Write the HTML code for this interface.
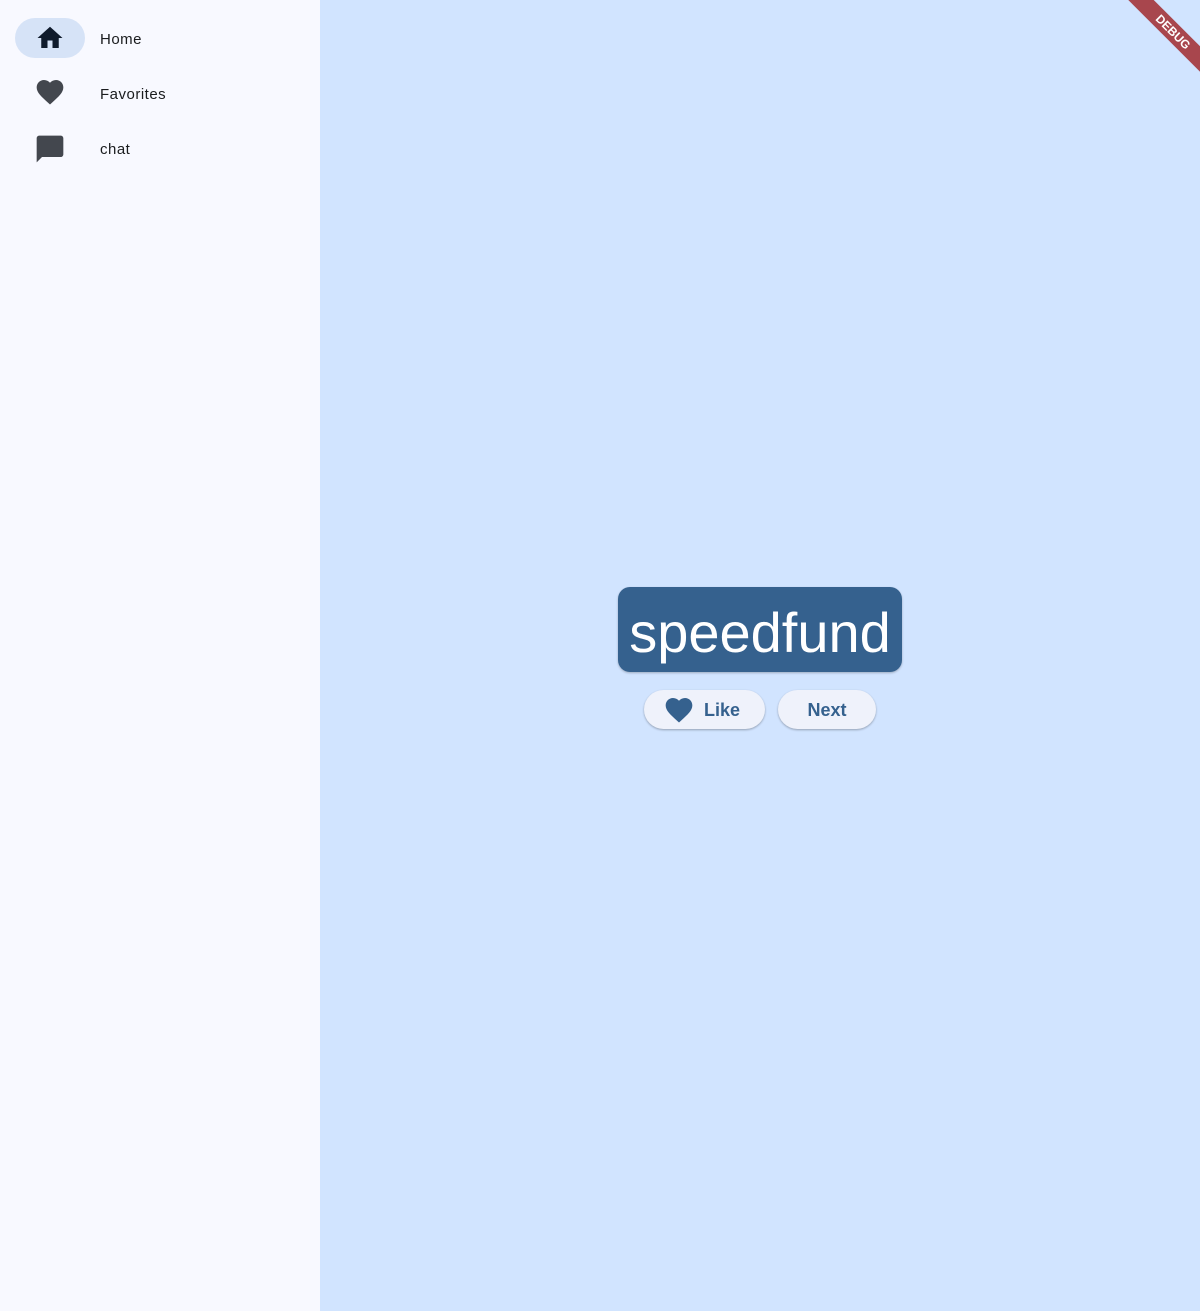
<!DOCTYPE html>
<html><head><style>
html,body{margin:0;padding:0;width:1200px;height:1311px;overflow:hidden;font-family:"Liberation Sans",sans-serif;}
.side{position:absolute;left:0;top:0;width:320px;height:1311px;background:#f8f9ff;}
.main{position:absolute;left:320px;top:0;width:880px;height:1311px;background:#d1e4ff;}
.item{position:absolute;left:0;width:320px;height:40px;}
.item .ic{position:absolute;left:15px;top:0;width:70px;height:40px;border-radius:20px;}
.item svg{position:absolute;}
.item span{position:absolute;left:100px;top:13px;font-size:15px;color:#1a1c1e;letter-spacing:0.5px;}
.card{position:absolute;left:618px;top:587px;width:284px;height:85px;background:#35618e;border-radius:12px;color:#fff;font-size:56px;text-align:center;line-height:92px;box-shadow:0 1px 2px rgba(0,0,0,.25);}
.btn{position:absolute;top:690px;height:39px;border-radius:20px;background:#eff2fb;box-shadow:0 1px 2px rgba(0,0,0,.3);color:#35618e;font-size:18px;font-weight:bold;line-height:41px;}
.banner{position:absolute;left:1113px;top:23px;width:120px;height:18px;background:#a8464d;transform:rotate(45deg);color:#fff;font-size:12px;font-weight:bold;text-align:center;line-height:18px;}
</style></head><body>
<div class="side">
 <div class="item" style="top:18px"><div class="ic" style="background:#d6e3f7"></div>
  <svg style="left:35px;top:5px" width="30" height="30" viewBox="0 0 24 24"><path d="M10 20v-6h4v6h5v-8h3L12 3 2 12h3v8z" fill="#0f1b2c"/></svg><span>Home</span></div>
 <div class="item" style="top:73px">
  <svg style="left:34px;top:3px" width="32" height="32" viewBox="0 0 24 24"><path d="M12 21.35l-1.45-1.32C5.4 15.36 2 12.28 2 8.5 2 5.42 4.42 3 7.5 3c1.74 0 3.41.81 4.5 2.09C13.09 3.81 14.76 3 16.5 3 19.58 3 22 5.42 22 8.5c0 3.78-3.4 6.86-8.55 11.54z" fill="#43474e"/></svg><span>Favorites</span></div>
 <div class="item" style="top:128px">
  <svg style="left:34px;top:5px" width="32" height="32" viewBox="0 0 24 24"><path d="M20 2H4c-1.1 0-2 .9-2 2v18l4-4h14c1.1 0 2-.9 2-2V4c0-1.1-.9-2-2-2z" fill="#43474e"/></svg><span>chat</span></div>
</div>
<div class="main"></div>
<div class="card">speedfund</div>
<div class="btn" style="left:644px;width:121px;">
 <svg style="position:absolute;left:19px;top:4px" width="32" height="32" viewBox="0 0 24 24"><path d="M12 21.35l-1.45-1.32C5.4 15.36 2 12.28 2 8.5 2 5.42 4.42 3 7.5 3c1.74 0 3.41.81 4.5 2.09C13.09 3.81 14.76 3 16.5 3 19.58 3 22 5.42 22 8.5c0 3.78-3.4 6.86-8.55 11.54z" fill="#35618e"/></svg>
 <span style="position:absolute;left:60px">Like</span></div>
<div class="btn" style="left:778px;width:98px;text-align:center">Next</div>
<div class="banner">DEBUG</div>
</body></html>
